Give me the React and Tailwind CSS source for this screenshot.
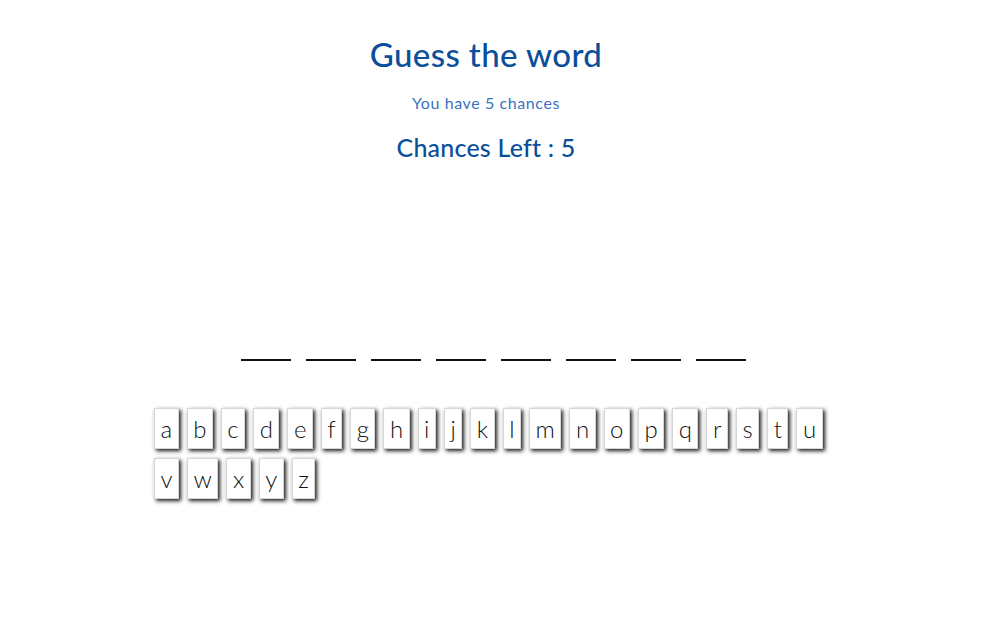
import React from "react";

const letters = "abcdefghijklmnopqrstuvwxyz".split("");
const word = "elephant";

export default function App() {
  return (
    <div className="min-h-screen bg-white font-['Lato','Open_Sans',sans-serif]">
      <div className="flex flex-col items-center pt-[35px] pr-[9px]">
        <h1 className="text-[33px] font-medium leading-[38px] tracking-[0.4px] text-[#0b4f9b]">Guess the word</h1>
        <p className="mt-[20px] text-[16px] leading-[20px] tracking-[0.6px] text-[#3a72c0]">You have 5 chances</p>
        <h2 className="mt-[20px] text-[25px] font-medium leading-[28px] tracking-[0.2px] text-[#0b4f9b]">Chances Left : 5</h2>
      </div>

      <div className="mt-[198px] flex justify-center gap-[15px] pl-[6px]">
        {word.split("").map((_, i) => (
          <span key={i} className="h-[2px] w-[50px] bg-[#111]" />
        ))}
      </div>

      <div className="mt-[47px] flex w-[688px] flex-wrap gap-x-[8px] gap-y-[9px] pl-[154px] box-content">
        {letters.map((l) => (
          <button
            key={l}
            type="button"
            className="h-[41px] border border-[#d6d6d6] bg-white px-[5.5px] text-[24px] font-light leading-[38px] text-[#111] shadow-[2px_2px_4px_rgba(0,0,0,0.9)]"
          >
            {l}
          </button>
        ))}
      </div>
    </div>
  );
}
